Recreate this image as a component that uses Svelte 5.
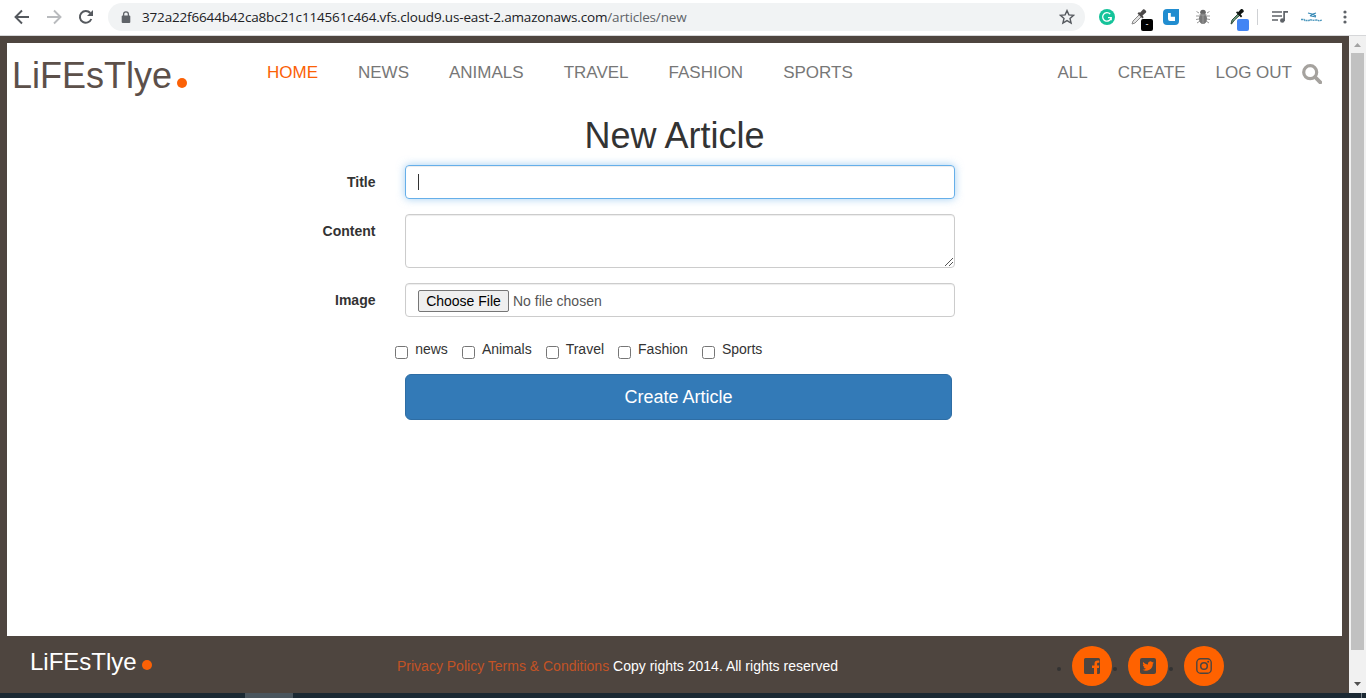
<script>
  const sections = ['HOME', 'NEWS', 'ANIMALS', 'TRAVEL', 'FASHION', 'SPORTS'];
  const account = ['ALL', 'CREATE', 'LOG OUT'];
  const categories = ['news', 'Animals', 'Travel', 'Fashion', 'Sports'];
</script>

<div class="window">
  <div class="toolbar">
    <div class="nav-icons">
      <svg width="32" height="20" viewBox="0 0 32 20"><path d="M23 10H10M16 3.500L9.500 10l6.500 6.500" fill="none" stroke="#55595e" stroke-width="1.900"/></svg>
      <svg width="32" height="20" viewBox="0 0 32 20"><path d="M9 10h13M16 3.500l6.500 6.500-6.500 6.500" fill="none" stroke="#b9bbbe" stroke-width="1.900"/></svg>
      <svg width="32" height="20" viewBox="0 0 32 20"><path d="M21.300 12A5.900 5.900 0 1 1 20.300 6" fill="none" stroke="#55595e" stroke-width="2"/><path d="M23 3v6h-6z" fill="#55595e"/></svg>
    </div>
    <div class="address">
      <svg class="lock" width="10" height="13" viewBox="0 0 10 13"><rect x="0.700" y="4.500" width="8.600" height="7.500" rx="1" fill="#5f6368"/><path d="M2.600 5V3.200a2.400 2.400 0 0 1 4.800 0V5" fill="none" stroke="#5f6368" stroke-width="1.300"/></svg>
      <span class="url">372a22f6644b42ca8bc21c114561c464.vfs.cloud9.us-east-2.amazonaws.com<span class="path">/articles/new</span></span>
      <svg class="star" width="16" height="16" viewBox="0 0 16 16"><path d="M8 1.600l1.900 4.300 4.700.4-3.600 3.100 1.100 4.600L8 11.600 3.900 14 5 9.400 1.400 6.300l4.700-.4z" fill="none" stroke="#55595e" stroke-width="1.400"/></svg>
    </div>
    <div class="extensions">
      <div class="ext"><svg width="16" height="16" viewBox="0 0 16 16"><circle cx="8" cy="8" r="8" fill="#15c39a"/><path d="M11.200 5A4.300 4.300 0 1 0 12.200 8.700H9M12.200 8.200v3" fill="none" stroke="#fff" stroke-width="1.300"/></svg></div>
      <div class="ext">
        <svg width="16" height="16" viewBox="0 0 16 16"><path d="M1 15l1-3 6.500-6.500 2 2L4 14z" fill="#e3e3e3" stroke="#888" stroke-width="1"/><path d="M6.500 4.500l5 5 1.200-1.200-1.200-1.800 3.500-3c1.200-1.200-1.800-4.200-3-3l-3 3.300L8 3z" fill="#4b4848"/></svg>
        <span class="badge black">-</span>
      </div>
      <div class="ext"><svg width="16" height="16" viewBox="0 0 16 16"><path d="M4 0h12v12a4 4 0 0 1-4 4H4a4 4 0 0 1-4-4V4a4 4 0 0 1 4-4z" fill="#218dd0"/><path d="M5 4h2.800v3.800H12V12H7a2 2 0 0 1-2-2z" fill="#fff"/></svg></div>
      <div class="ext"><svg width="16" height="16" viewBox="0 0 16 16"><path d="M4 4L1.500 2.500M12 4l2.500-1.500M4 7H1M12 7h3M4 10l-3 .5M12 10l3 .5M5 12l-3 2M11 12l3 2" stroke="#999" fill="none"/><ellipse cx="8" cy="3.200" rx="2.800" ry="2.500" fill="#666"/><ellipse cx="8" cy="9.500" rx="4" ry="5.500" fill="#777"/><path d="M4 6h8M8 6v9" stroke="#aaa" stroke-width=".7"/></svg></div>
      <div class="ext second">
        <svg width="16" height="16" viewBox="0 0 16 16"><path d="M2 15l1-4 6.500-6.500 1.500 1.500L5.500 11l-3 4z" fill="#6f9c80" stroke="#253e2e" stroke-width=".9"/><path d="M7 3.500l5 5 1.200-1.200-1.500-2 2.800-2.300c1.200-1.200-1.500-4-2.700-2.700l-2.800 3-.8-1z" fill="#101512"/></svg>
        <span class="badge blue"></span>
      </div>
      <span class="divider"></span>
      <svg class="queue" width="17" height="14" viewBox="0 0 17 14"><path d="M0 2h10M0 6h10M0 10h6" stroke="#5f6368" stroke-width="1.700"/><circle cx="10.300" cy="10.500" r="2.300" fill="#5f6368"/><path d="M12.100 11V1.800H16" fill="none" stroke="#5f6368" stroke-width="1.700"/></svg>
      <svg class="profile" width="22" height="12" viewBox="0 0 22 12"><path d="M7 2l4 1 4 2M9 5l3-2 3-1M10 5l5 1" fill="none" stroke="#3588b5" stroke-width="1.200"/><path d="M0 8.500h3l1 1h4l1-1 3 .8 4-.3 2 .8 3-.8" fill="none" stroke="#4b97bd" stroke-width="1.300" stroke-dasharray="2 .5"/></svg>
      <svg class="dots" width="4" height="14" viewBox="0 0 4 14"><circle cx="2" cy="2" r="1.600" fill="#5f6368"/><circle cx="2" cy="7" r="1.600" fill="#5f6368"/><circle cx="2" cy="12" r="1.600" fill="#5f6368"/></svg>
    </div>
  </div>

  <div class="viewport">
    <div class="page">
      <main>
        <header>
          <div class="brand">LiFEsTlye<i class="dot"></i></div>
          <nav class="sections">
            {#each sections as item, i}<a class:active={i === 0}>{item}</a>{/each}
          </nav>
          <nav class="account">
            {#each account as item}<a>{item}</a>{/each}
          </nav>
          <svg class="search" width="20" height="20" viewBox="0 0 20 20"><circle cx="8.200" cy="8.200" r="6.500" fill="none" stroke="#a5a29e" stroke-width="3.200"/><path d="M13 13l5.300 5.300" stroke="#a5a29e" stroke-width="3.800" stroke-linecap="round"/></svg>
        </header>

        <h1>New Article</h1>
        <form>
          <div class="row"><span class="label">Title</span><div class="control focused"><span class="caret"></span></div></div>
          <div class="row content"><span class="label">Content</span><div class="control area"><svg width="8" height="8" viewBox="0 0 8 8" shape-rendering="crispEdges"><path d="M0 7h1v1H0zM1 6h1v1H1zM2 5h1v1H2zM3 4h1v1H3zM4 3h1v1H4zM5 2h1v1H5zM6 1h1v1H6zM7 0h1v1H7zM4 7h1v1H4zM5 6h1v1H5zM6 5h1v1H6zM7 4h1v1H7z" fill="#555"/></svg></div></div>
          <div class="row"><span class="label">Image</span><div class="control file"><button type="button">Choose File</button><span>No file chosen</span></div></div>
          <div class="checks">
            {#each categories as c}<div class="check"><i></i><span>{c}</span></div>{/each}
          </div>
          <button type="button" class="submit">Create Article</button>
        </form>
      </main>
      <footer>
        <div class="foot-brand">LiFEsTlye<i class="dot"></i></div>
        <p><a>Privacy Policy</a> <a>Terms &amp; Conditions</a> Copy rights 2014. All rights reserved</p>
        <div class="social">
          <i class="bullet"></i>
          <span class="circle"><svg width="16" height="16" viewBox="0 0 16 16"><path fill-rule="evenodd" d="M1.500 0h13A1.500 1.500 0 0 1 16 1.500v13a1.500 1.500 0 0 1-1.500 1.500h-1.400V9.900h1.800l.3-2.400h-2.100V6c0-.7.200-1.200 1.200-1.200h1V2.600c-.2 0-1-.1-1.700-.1-1.900 0-3.100 1.100-3.100 3.200v1.800H8v2.400h2V16H1.500A1.500 1.500 0 0 1 0 14.500v-13A1.500 1.500 0 0 1 1.500 0z" fill="#4e453f"/></svg></span>
          <i class="bullet"></i>
          <span class="circle"><svg width="16" height="16" viewBox="0 0 16 16"><rect width="16" height="16" rx="2" fill="#4e453f"/><path d="M13.800 4.500c-.4.200-.8.300-1.300.4.500-.3.800-.7 1-1.200-.4.300-.9.400-1.400.5A2.400 2.400 0 0 0 8 6.400C6.100 6.300 4.400 5.400 3.200 4c-.6 1-.3 2.400.8 3.100-.4 0-.7-.1-1.100-.3 0 1.100.8 2.100 1.900 2.300-.3.100-.7.100-1.100 0 .3 1 1.200 1.700 2.300 1.700-1 .8-2.200 1.100-3.500 1a6.800 6.800 0 0 0 10.300-6c.4-.3.800-.7 1-1.300z" fill="#ff6200"/></svg></span>
          <i class="bullet"></i>
          <span class="circle"><svg width="16" height="16" viewBox="0 0 16 16"><rect x=".8" y=".8" width="14.400" height="14.400" rx="3.800" fill="none" stroke="#4e453f" stroke-width="1.400"/><circle cx="8" cy="8" r="3.300" fill="none" stroke="#4e453f" stroke-width="1.500"/><circle cx="12.200" cy="3.800" r="1" fill="#4e453f"/></svg></span>
        </div>
      </footer>
    </div>
    <div class="scrollbar">
      <svg width="17" height="17" viewBox="0 0 17 17"><path d="M5 11h7L8.500 7z" fill="#a3a3a3"/></svg>
      <span class="thumb"></span>
      <svg width="17" height="17" viewBox="0 0 17 17"><path d="M5 6h7l-3.500 4z" fill="#505050"/></svg>
    </div>
  </div>
  <div class="taskbar"><span class="task"></span><span class="edge"></span></div>
</div>

<style>
  :global(body) { margin: 0; overflow: hidden; }
  * { box-sizing: border-box; }
  svg { display: block; flex: none; }
  .window { width: 1366px; height: 698px; display: flex; flex-direction: column; font: 14px/20px "Liberation Sans", Arial, sans-serif; color: #333; background: #fff; overflow: hidden; }
  .toolbar { height: 36px; flex: none; display: flex; border-bottom: 1px solid #d6d7d9; padding: 3px 0 4px 6px; align-items: center; }
  .nav-icons { display: flex; width: 102px; }
  .address { width: 977px; height: 28px; border-radius: 14px; background: #f1f3f4; display: flex; align-items: center; padding: 0 10px 0 13px; }
  .url { margin-left: 11px; font: 13.500px/20px "Open Sans", "Noto Sans", sans-serif; color: #202124; white-space: nowrap; letter-spacing: -.165px; }
  .path { color: #5f6368; }
  .star { margin-left: auto; }
  .extensions { display: flex; align-items: center; margin-left: 6px; }
  .ext { width: 32px; height: 28px; display: flex; justify-content: center; align-items: center; position: relative; }
  .second { padding-left: 4px; }
  .badge { position: absolute; left: 18px; top: 16px; width: 12px; height: 12px; border-radius: 2px; font-size: 9px; line-height: 11px; text-align: center; color: #fff; }
  .black { background: #000; }
  .blue { background: #4285f4; }
  .divider { width: 1px; height: 16px; background: #cfd1d4; margin-left: 6px; }
  .queue { margin-left: 14px; }
  .profile { margin-left: 12px; }
  .dots { margin-left: 20px; }
  .viewport { height: 657px; display: flex; }
  .page { width: 1349px; background: #4e453f; padding: 7px 0 0; display: flex; flex-direction: column; }
  main { height: 593px; margin: 0 7px; background: #fff; flex: none; }
  header { height: 73px; display: flex; align-items: flex-start; }
  .brand { width: 260px; padding: 13px 0 0 5px; font-size: 36px; line-height: 40px; color: #5c504a; }
  .dot { display: inline-block; width: 10px; height: 10px; border-radius: 50%; background: #fb6106; margin-left: 5px; }
  .brand .dot { vertical-align: 0; }
  nav { display: flex; font-size: 17px; line-height: 24px; color: #777; padding-top: 18px; white-space: nowrap; }
  .sections { gap: 40px; }
  .account { gap: 30px; margin-left: auto; }
  .active { color: #fb6106; }
  .search { margin: 21px 20px 0 10px; }
  h1 { font-size: 36px; line-height: 40px; font-weight: 400; margin: 0; text-align: center; }
  form { padding: 9px 0 0 298px; }
  .row { display: flex; margin-bottom: 15px; }
  .label { width: 70.500px; margin-right: 29.500px; text-align: right; font-weight: 700; padding-top: 7px; }
  .control { width: 550px; height: 34px; border: 1px solid #ccc; border-radius: 4px; box-shadow: inset 0 1px 1px rgba(0,0,0,.075); display: flex; align-items: center; padding: 0 12px; }
  .focused { border-color: #66afe9; box-shadow: inset 0 1px 1px rgba(0,0,0,.075), 0 0 8px rgba(102,175,233,.6); }
  .caret { width: 1px; height: 16px; background: #333; }
  .area { height: 54px; align-items: flex-end; justify-content: flex-end; padding: 0 1px 1px; }
  .file { gap: 4px; color: #555; }
  .file button { width: 91px; height: 22px; padding: 0; margin-top: 2px; font: 14px/18px "Liberation Sans", Arial, sans-serif; color: #000; background: #efefef; border: 1px solid #767676; border-radius: 2px; white-space: nowrap; }
  .file span { margin-top: 2px; }
  .checks { display: flex; gap: 14px; margin: 22px 0 15px 90.200px; height: 20px; }
  .check { display: flex; }
  .check i { width: 13px; height: 13px; border: 1px solid #767676; border-radius: 2.500px; margin: 7px 7px 0 0; }
  .submit { display: block; width: 547px; height: 46px; margin-left: 100px; border: 1px solid #2e6da4; border-radius: 6px; background: #337ab7; color: #fff; font: 18px/24px "Liberation Sans", Arial, sans-serif; }
  footer { height: 57px; display: flex; align-items: flex-start; color: #fff; }
  .foot-brand { width: 397px; padding: 13px 0 0 30px; font-size: 24px; line-height: 26px; }
  footer p { margin: 20px 0 0; width: 660px; white-space: nowrap; }
  footer p a { color: #c35325; }
  .social { display: flex; padding-top: 10px; align-items: center; }
  .bullet { width: 4px; height: 4px; border-radius: 50%; background: #333; margin: 5px 11px 0 0; }
  .circle { width: 40px; height: 40px; border-radius: 50%; background: #ff6200; display: flex; align-items: center; justify-content: center; margin-right: 1px; }
  .scrollbar { width: 17px; background: #f1f1f1; display: flex; flex-direction: column; align-items: center; }
  .thumb { width: 13px; height: 597px; background: #c1c1c1; margin-bottom: 26px; }
  .taskbar { height: 5px; background: #1b2933; display: flex; }
  .task { width: 48px; margin-left: 245px; background: #4a555d; }
  .edge { width: 1px; margin-left: 1068px; background: #77818a; }
</style>
